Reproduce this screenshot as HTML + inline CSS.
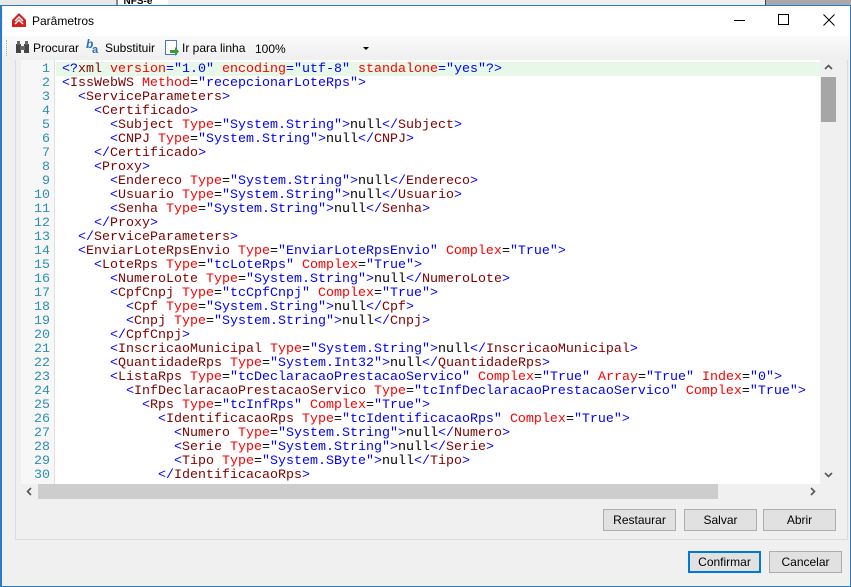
<!DOCTYPE html>
<html><head><meta charset="utf-8"><style>
*{margin:0;padding:0;box-sizing:border-box}
body{width:851px;height:587px;overflow:hidden;background:#f0f0f0;font-family:"Liberation Sans",sans-serif;font-size:12px;position:relative}
.abs{position:absolute}
.code{position:absolute;left:62px;top:63px;font-family:"Liberation Mono",monospace;font-size:13.33px;line-height:14px;white-space:pre;color:#000}
.ln{position:absolute;left:21px;top:63px;width:30px;text-align:right;font-family:"Liberation Mono",monospace;font-size:13.33px;line-height:14px;color:#2b91af;white-space:pre;padding-right:1px}
.b{color:#0000ff}.t{color:#800000}.a{color:#ff0000}
.btn{position:absolute;height:22px;background:#e1e1e1;border:1px solid #adadad;text-align:center;line-height:20px;font-size:12px;color:#000}
</style></head><body>
<div class="abs" style="left:0;top:0;width:116px;height:6px;background:#e8e8e8"></div>
<div class="abs" style="left:116px;top:0;width:2px;height:6px;background:#888"></div>
<div class="abs" style="left:118px;top:0;width:50px;height:6px;background:#fff;font-size:10px;font-weight:bold;line-height:4px;overflow:hidden">&nbsp;&nbsp;NFS-e</div>
<div class="abs" style="left:765px;top:0;width:86px;height:6px;background:#a8a8a8;border-left:1px solid #444"></div>
<div class="abs" style="left:0;top:5px;width:851px;height:582px;border:1px solid #2b7bc8;border-top:1px solid #2b7bc8;border-left:2px solid #2b7bc8"></div>
<div class="abs" style="left:3px;top:6px;width:847px;height:30px;background:#fff"></div>
<svg class="abs" style="left:11px;top:12px" width="16" height="16" viewBox="0 0 16 16"><path d="M1 8L8 1L15 8V15H1Z" fill="#d12020"/><path d="M4 9l4-4 4 4M4 12l4-4 4 4" stroke="#fff" stroke-width="1.5" fill="none"/></svg>
<div class="abs" style="left:32px;top:14px;font-size:12px">Parâmetros</div>
<div class="abs" style="left:734px;top:20px;width:11px;height:1px;background:#000"></div>
<div class="abs" style="left:778px;top:14px;width:11px;height:11px;border:1px solid #000"></div>
<svg class="abs" style="left:823px;top:14px" width="12" height="12"><path d="M0.5 0.5L11.5 11.5M11.5 0.5L0.5 11.5" stroke="#000"/></svg>
<div class="abs" style="left:3px;top:36px;width:847px;height:24px;background:linear-gradient(#fafafa,#efefef)"></div>
<div class="abs" style="left:6px;top:40px;width:1px;height:16px;border-left:1px dotted #aaa"></div>
<svg class="abs" style="left:15px;top:41px" width="15" height="13"><rect x="1" y="3" width="5" height="9" fill="#444"/><rect x="9" y="3" width="5" height="9" fill="#444"/><rect x="5" y="5" width="5" height="4" fill="#666"/><rect x="2" y="0" width="3" height="4" fill="#666"/><rect x="10" y="0" width="3" height="4" fill="#666"/></svg>
<div class="abs" style="left:33px;top:41px">Procurar</div>
<div class="abs" style="left:86px;top:37px;font-weight:bold;color:#2a6fb8;font-size:12px;font-style:italic">b</div>
<div class="abs" style="left:92px;top:44px;font-weight:bold;color:#2a6fb8;font-size:11px">a</div>
<div class="abs" style="left:105px;top:41px">Substituir</div>
<svg class="abs" style="left:164px;top:39px" width="16" height="18"><rect x="1.5" y="1.5" width="11" height="14" fill="#fff" stroke="#4a7ebb"/><path d="M6 11h5v-3l4 4.5-4 4.5v-3H6z" fill="#3a9a3a"/></svg>
<div class="abs" style="left:182px;top:41px">Ir para linha</div>
<div class="abs" style="left:255px;top:42px">100%</div>
<div class="abs" style="left:363px;top:47px;width:0;height:0;border-left:3px solid transparent;border-right:3px solid transparent;border-top:3px solid #000"></div>
<div class="abs" style="left:15px;top:60px;width:833px;height:480px;border:1px solid #dcdcdc;border-top:none"></div>
<div class="abs" style="left:21px;top:60px;width:799px;height:424px;background:#fff"></div>
<div class="abs" style="left:21px;top:60px;width:34px;height:424px;background:#f7f7f7;border-right:1px solid #e0e0e0"></div>
<div class="abs" style="left:56px;top:62px;width:764px;height:14px;background:#e8f8e8"></div>
<div class="ln">1
2
3
4
5
6
7
8
9
10
11
12
13
14
15
16
17
18
19
20
21
22
23
24
25
26
27
28
29
30</div>
<div class="code"><span class="b">&lt;?</span><span class="t">xml</span> <span class="a">version</span><span class="b">="1.0"</span> <span class="a">encoding</span><span class="b">="utf-8"</span> <span class="a">standalone</span><span class="b">="yes"?&gt;</span>
<span class="b">&lt;</span><span class="t">IssWebWS</span> <span class="a">Method</span>=<span class="b">"recepcionarLoteRps"&gt;</span>
  <span class="b">&lt;</span><span class="t">ServiceParameters</span><span class="b">&gt;</span>
    <span class="b">&lt;</span><span class="t">Certificado</span><span class="b">&gt;</span>
      <span class="b">&lt;</span><span class="t">Subject</span> <span class="a">Type</span>=<span class="b">"System.String"&gt;</span>null<span class="b">&lt;/</span><span class="t">Subject</span><span class="b">&gt;</span>
      <span class="b">&lt;</span><span class="t">CNPJ</span> <span class="a">Type</span>=<span class="b">"System.String"&gt;</span>null<span class="b">&lt;/</span><span class="t">CNPJ</span><span class="b">&gt;</span>
    <span class="b">&lt;/</span><span class="t">Certificado</span><span class="b">&gt;</span>
    <span class="b">&lt;</span><span class="t">Proxy</span><span class="b">&gt;</span>
      <span class="b">&lt;</span><span class="t">Endereco</span> <span class="a">Type</span>=<span class="b">"System.String"&gt;</span>null<span class="b">&lt;/</span><span class="t">Endereco</span><span class="b">&gt;</span>
      <span class="b">&lt;</span><span class="t">Usuario</span> <span class="a">Type</span>=<span class="b">"System.String"&gt;</span>null<span class="b">&lt;/</span><span class="t">Usuario</span><span class="b">&gt;</span>
      <span class="b">&lt;</span><span class="t">Senha</span> <span class="a">Type</span>=<span class="b">"System.String"&gt;</span>null<span class="b">&lt;/</span><span class="t">Senha</span><span class="b">&gt;</span>
    <span class="b">&lt;/</span><span class="t">Proxy</span><span class="b">&gt;</span>
  <span class="b">&lt;/</span><span class="t">ServiceParameters</span><span class="b">&gt;</span>
  <span class="b">&lt;</span><span class="t">EnviarLoteRpsEnvio</span> <span class="a">Type</span>=<span class="b">"EnviarLoteRpsEnvio"</span> <span class="a">Complex</span>=<span class="b">"True"&gt;</span>
    <span class="b">&lt;</span><span class="t">LoteRps</span> <span class="a">Type</span>=<span class="b">"tcLoteRps"</span> <span class="a">Complex</span>=<span class="b">"True"&gt;</span>
      <span class="b">&lt;</span><span class="t">NumeroLote</span> <span class="a">Type</span>=<span class="b">"System.String"&gt;</span>null<span class="b">&lt;/</span><span class="t">NumeroLote</span><span class="b">&gt;</span>
      <span class="b">&lt;</span><span class="t">CpfCnpj</span> <span class="a">Type</span>=<span class="b">"tcCpfCnpj"</span> <span class="a">Complex</span>=<span class="b">"True"&gt;</span>
        <span class="b">&lt;</span><span class="t">Cpf</span> <span class="a">Type</span>=<span class="b">"System.String"&gt;</span>null<span class="b">&lt;/</span><span class="t">Cpf</span><span class="b">&gt;</span>
        <span class="b">&lt;</span><span class="t">Cnpj</span> <span class="a">Type</span>=<span class="b">"System.String"&gt;</span>null<span class="b">&lt;/</span><span class="t">Cnpj</span><span class="b">&gt;</span>
      <span class="b">&lt;/</span><span class="t">CpfCnpj</span><span class="b">&gt;</span>
      <span class="b">&lt;</span><span class="t">InscricaoMunicipal</span> <span class="a">Type</span>=<span class="b">"System.String"&gt;</span>null<span class="b">&lt;/</span><span class="t">InscricaoMunicipal</span><span class="b">&gt;</span>
      <span class="b">&lt;</span><span class="t">QuantidadeRps</span> <span class="a">Type</span>=<span class="b">"System.Int32"&gt;</span>null<span class="b">&lt;/</span><span class="t">QuantidadeRps</span><span class="b">&gt;</span>
      <span class="b">&lt;</span><span class="t">ListaRps</span> <span class="a">Type</span>=<span class="b">"tcDeclaracaoPrestacaoServico"</span> <span class="a">Complex</span>=<span class="b">"True"</span> <span class="a">Array</span>=<span class="b">"True"</span> <span class="a">Index</span>=<span class="b">"0"&gt;</span>
        <span class="b">&lt;</span><span class="t">InfDeclaracaoPrestacaoServico</span> <span class="a">Type</span>=<span class="b">"tcInfDeclaracaoPrestacaoServico"</span> <span class="a">Complex</span>=<span class="b">"True"&gt;</span>
          <span class="b">&lt;</span><span class="t">Rps</span> <span class="a">Type</span>=<span class="b">"tcInfRps"</span> <span class="a">Complex</span>=<span class="b">"True"&gt;</span>
            <span class="b">&lt;</span><span class="t">IdentificacaoRps</span> <span class="a">Type</span>=<span class="b">"tcIdentificacaoRps"</span> <span class="a">Complex</span>=<span class="b">"True"&gt;</span>
              <span class="b">&lt;</span><span class="t">Numero</span> <span class="a">Type</span>=<span class="b">"System.String"&gt;</span>null<span class="b">&lt;/</span><span class="t">Numero</span><span class="b">&gt;</span>
              <span class="b">&lt;</span><span class="t">Serie</span> <span class="a">Type</span>=<span class="b">"System.String"&gt;</span>null<span class="b">&lt;/</span><span class="t">Serie</span><span class="b">&gt;</span>
              <span class="b">&lt;</span><span class="t">Tipo</span> <span class="a">Type</span>=<span class="b">"System.SByte"&gt;</span>null<span class="b">&lt;/</span><span class="t">Tipo</span><span class="b">&gt;</span>
            <span class="b">&lt;/</span><span class="t">IdentificacaoRps</span><span class="b">&gt;</span></div>
<div class="abs" style="left:820px;top:60px;width:17px;height:424px;background:#f0f0f0"></div>
<svg class="abs" style="left:824px;top:64px" width="9" height="6"><path d="M1 5L4.5 1.5L8 5" stroke="#555" stroke-width="1.6" fill="none"/></svg>
<div class="abs" style="left:821px;top:77px;width:15px;height:45px;background:#a6a6a6"></div>
<svg class="abs" style="left:824px;top:472px" width="9" height="6"><path d="M1 1L4.5 4.5L8 1" stroke="#555" stroke-width="1.6" fill="none"/></svg>
<div class="abs" style="left:21px;top:484px;width:799px;height:15px;background:#f0f0f0"></div>
<svg class="abs" style="left:26px;top:487px" width="6" height="9"><path d="M5 1L1.5 4.5L5 8" stroke="#555" stroke-width="1.6" fill="none"/></svg>
<div class="abs" style="left:38px;top:484px;width:680px;height:15px;background:#cdcdcd"></div>
<svg class="abs" style="left:810px;top:487px" width="6" height="9"><path d="M1 1L4.5 4.5L1 8" stroke="#555" stroke-width="1.6" fill="none"/></svg>
<div class="btn" style="left:603px;top:509px;width:73px">Restaurar</div>
<div class="btn" style="left:684px;top:509px;width:73px">Salvar</div>
<div class="btn" style="left:763px;top:509px;width:73px">Abrir</div>
<div class="btn" style="left:688px;top:551px;width:73px;border:2px solid #0078d7;line-height:18px">Confirmar</div>
<div class="btn" style="left:769px;top:551px;width:73px">Cancelar</div>
</body></html>
